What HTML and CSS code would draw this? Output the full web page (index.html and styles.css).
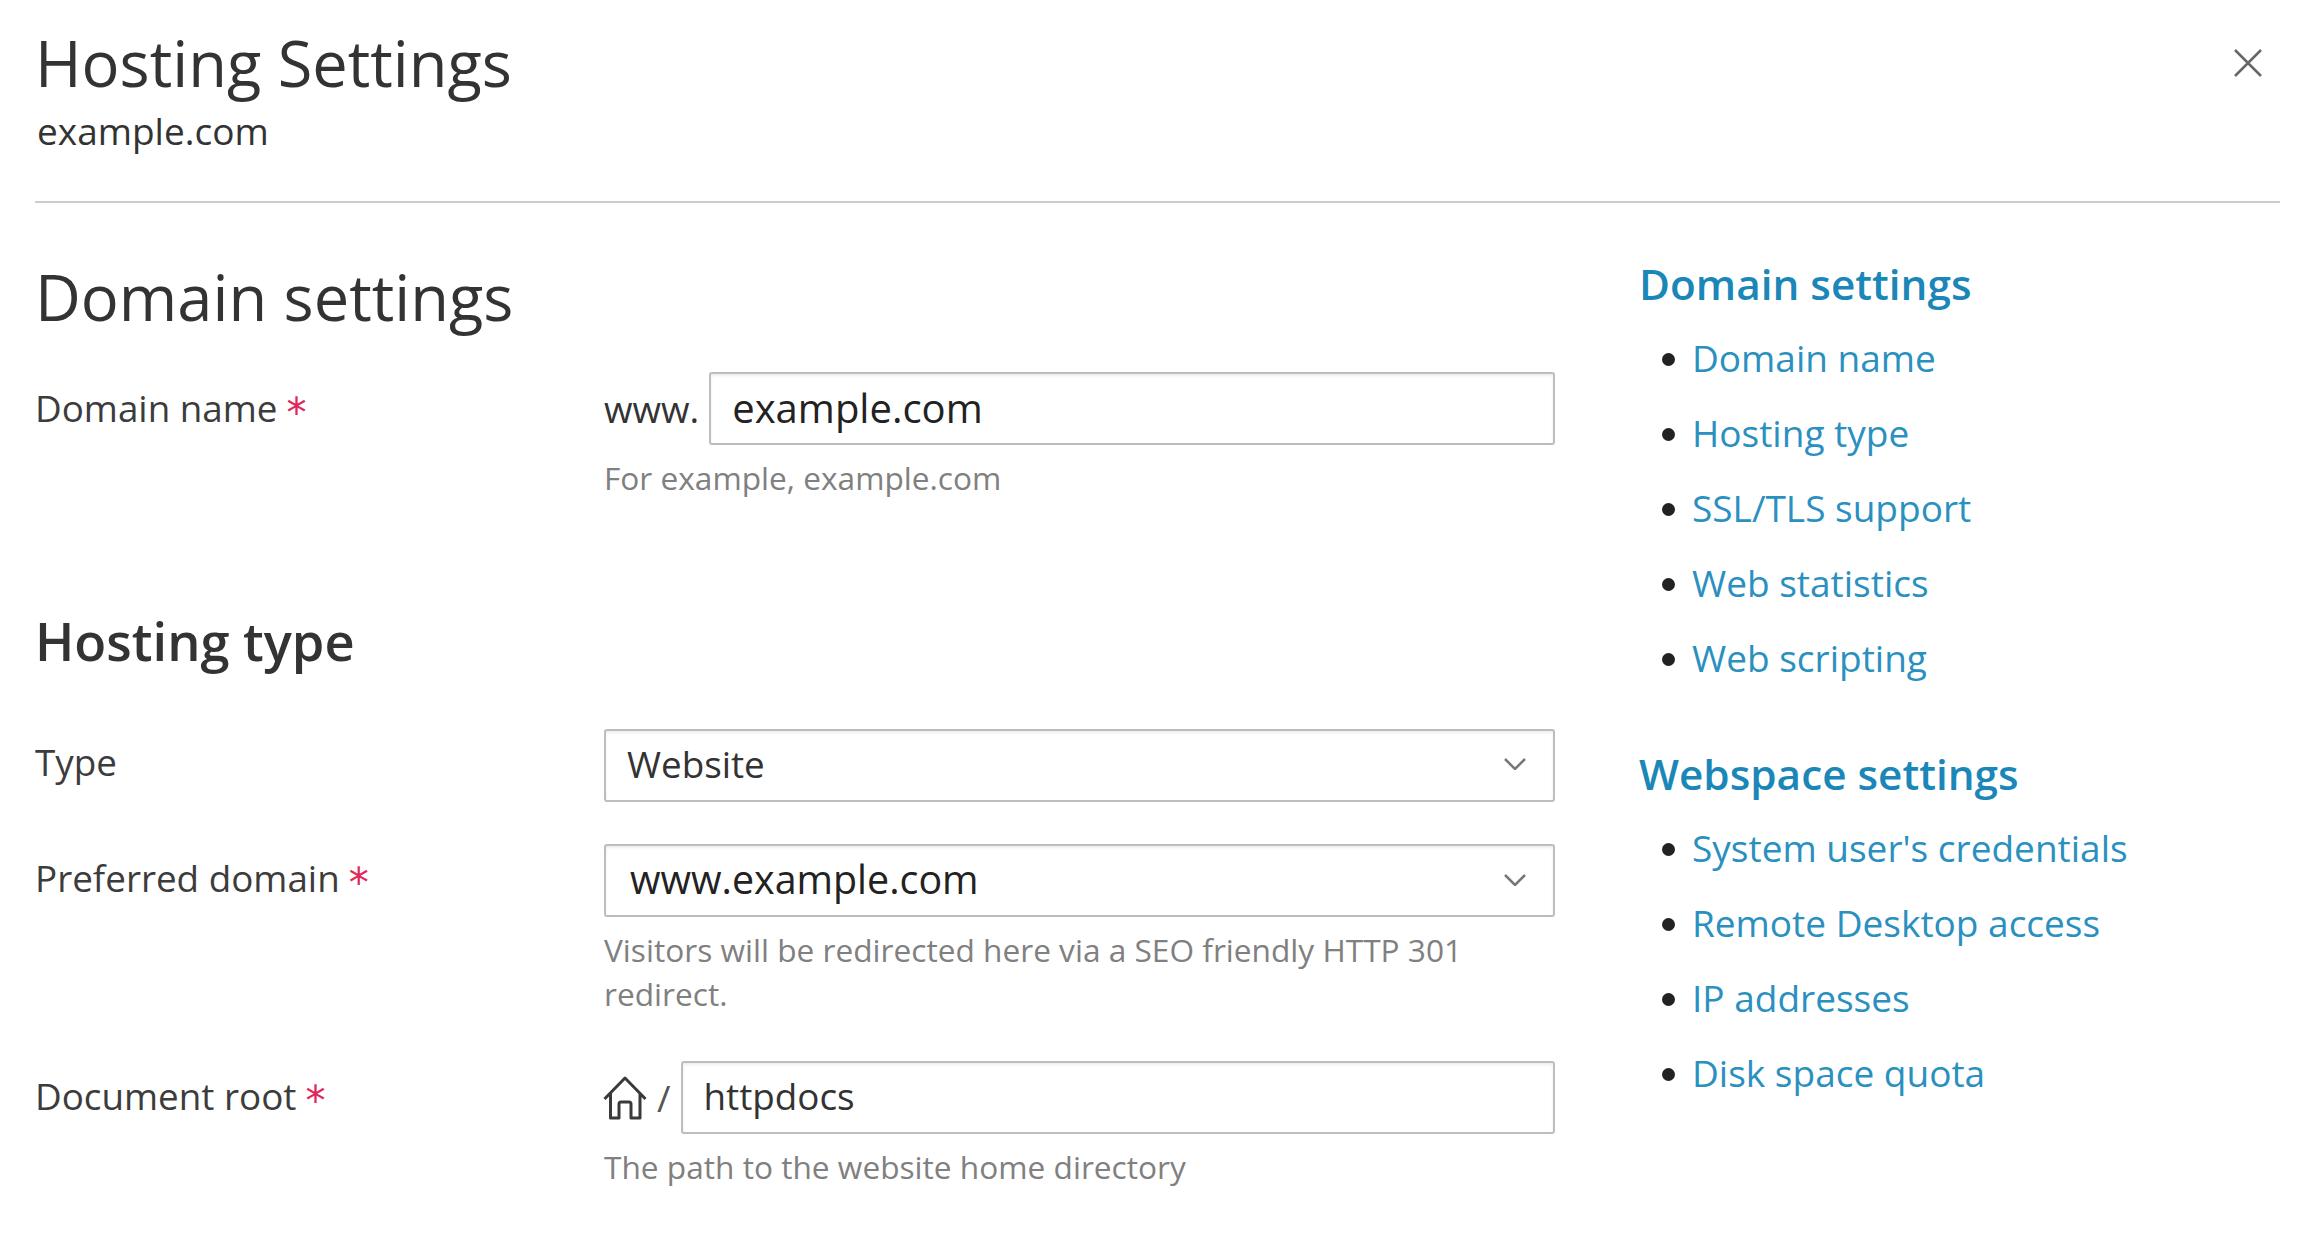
FILE: index.html

```html
<!DOCTYPE html>
<html lang="en">
<head>
  <meta charset="UTF-8" />
  <meta name="viewport" content="width=device-width, initial-scale=1.0"/>
  <title>Hosting Settings</title>
  <link rel="stylesheet" href="styles.css">
</head>
<body>
  <header class="header">
    <div>
      <h1 class="header-title">Hosting Settings</h1>
      <p class="header-sub">example.com</p>
    </div>
    <svg class="close" viewBox="0 0 28 28" width="28" height="28" aria-label="Close">
      <path d="M1 1L27 27M27 1L1 27" />
    </svg>
  </header>

  <div class="layout">
    <main class="form">
      <h2 class="section-title">Domain settings</h2>

      <div class="row">
        <div class="label label-domain">Domain name<span class="req">*</span></div>
        <div>
          <div class="field">
            <span class="prefix">www.</span>
            <div class="control control-lg">example.com</div>
          </div>
          <p class="hint">For example, example.com</p>
        </div>
      </div>

      <h3 class="group-title">Hosting type</h3>

      <div class="row">
        <div class="label label-type">Type</div>
        <div class="control">
          Website
          <svg class="chevron" viewBox="0 0 22 12" width="22" height="12"><path d="M1 1L11 11L21 1" /></svg>
        </div>
      </div>

      <div class="row row-next">
        <div class="label label-preferred">Preferred domain<span class="req">*</span></div>
        <div>
          <div class="control control-www">
            www.example.com
            <svg class="chevron" viewBox="0 0 22 12" width="22" height="12"><path d="M1 1L11 11L21 1" /></svg>
          </div>
          <p class="hint">Visitors will be redirected here via a SEO friendly HTTP 301 redirect.</p>
        </div>
      </div>

      <div class="row row-last">
        <div class="label label-root">Document root<span class="req">*</span></div>
        <div>
          <div class="field">
            <svg class="home" viewBox="0 0 44 44" width="44" height="44">
              <path d="M1.5 23L22 2L42.5 23M7.5 17V42H16V28Q16 26 18 26H26Q28 26 28 28V42H37V17" />
            </svg>
            <span class="slash">/</span>
            <div class="control">httpdocs</div>
          </div>
          <p class="hint">The path to the website home directory</p>
        </div>
      </div>
    </main>

    <nav class="side">
      <h4 class="side-title">Domain settings</h4>
      <ul class="side-list">
        <li><a href="#">Domain name</a></li>
        <li><a href="#">Hosting type</a></li>
        <li><a href="#">SSL/TLS support</a></li>
        <li><a href="#">Web statistics</a></li>
        <li><a href="#">Web scripting</a></li>
      </ul>
      <h4 class="side-title side-title-next">Webspace settings</h4>
      <ul class="side-list">
        <li><a href="#">System user's credentials</a></li>
        <li><a href="#">Remote Desktop access</a></li>
        <li><a href="#">IP addresses</a></li>
        <li><a href="#">Disk space quota</a></li>
      </ul>
    </nav>
  </div>
</body>
</html>
```

FILE: styles.css

```css
* {
  box-sizing: border-box;
}
body {
  margin: 0;
  padding: 0 24px 0 35px;
  background: #fff;
  color: #3c3c3c;
  font-family: "Open Sans", "Noto Sans", sans-serif;
  font-size: 36.8px;
}
h1, h2, h3, h4, p, ul {
  margin: 0;
}

.header {
  display: flex;
  justify-content: space-between;
  height: 203px;
  padding-top: 23px;
  border-bottom: 2px solid #ccc;
}
.header-title {
  font-size: 63.2px;
  font-weight: 400;
  line-height: 80px;
  color: #333;
}
.header-sub {
  font-size: 37px;
  line-height: 56px;
  padding-left: 2px;
  color: #333;
}
.close {
  margin: 26px 18px 0 0;
}
.close path {
  fill: none;
  stroke: #666;
  stroke-width: 2.5;
}

.layout {
  display: grid;
  grid-template-columns: 1520px 1fr;
  column-gap: 84px;
  padding-top: 55px;
}

.section-title {
  font-size: 63.2px;
  font-weight: 400;
  line-height: 78px;
  margin-bottom: 36px;
  color: #333;
}
.group-title {
  font-size: 52.4px;
  font-weight: 600;
  line-height: 60px;
  margin: 111px 0 58px;
  color: #333;
}

.row {
  display: grid;
  grid-template-columns: 569px 1fr;
}
.row-next {
  margin-top: 42px;
}
.row-last {
  margin-top: 45px;
}
.label {
  height: 73px;
  display: flex;
  align-items: center;
}
.label-domain {
  padding-bottom: 2px;
}
.label-type {
  padding-bottom: 8px;
}
.label-preferred {
  padding-bottom: 6px;
}
.label-root {
  padding-bottom: 3px;
}
.req {
  font-family: "DejaVu Sans", sans-serif;
  font-size: 40px;
  color: #e0285a;
  margin-left: 9px;
  transform: translateY(5px);
}

.field {
  display: flex;
  align-items: center;
}
.prefix {
  margin-right: 10px;
  color: #333;
}
.home {
  flex: none;
  margin-left: -1px;
}
.home path {
  fill: none;
  stroke: #3a3a3a;
  stroke-width: 3;
  stroke-linejoin: round;
}
.slash {
  margin: 0 10px 0 10px;
  color: #555;
}
.control {
  flex: 1;
  height: 73px;
  display: flex;
  align-items: center;
  justify-content: space-between;
  padding: 0 21px 3px;
  border: 2px solid #bdbdbd;
  border-radius: 3px;
  box-shadow: inset 0 2px 3px rgba(0,0,0,0.07);
  color: #333;
}
.control-lg {
  font-size: 40px;
  padding-bottom: 2px;
  color: #222;
}
.control-www {
  font-size: 39.4px;
  padding-left: 24px;
  color: #222;
}
.chevron {
  margin-right: 6px;
}
.control-www .chevron {
  margin-top: 2px;
}
.chevron path {
  fill: none;
  stroke: #777;
  stroke-width: 2.5;
}
.hint {
  margin-top: 11px;
  font-size: 31.65px;
  line-height: 44px;
  color: #808080;
}

.side-title {
  font-size: 42.3px;
  font-weight: 600;
  line-height: 54px;
  margin-top: -1px;
  color: #1b87b8;
}
.side-title-next {
  margin-top: 52px;
}
.side-list {
  margin-top: 9px;
  padding-left: 56px;
  color: #222;
}
.side-list li {
  font-size: 37px;
  line-height: 75px;
}
.side-list a {
  margin-left: -3px;
  color: #2a90bf;
  text-decoration: none;
}
```
